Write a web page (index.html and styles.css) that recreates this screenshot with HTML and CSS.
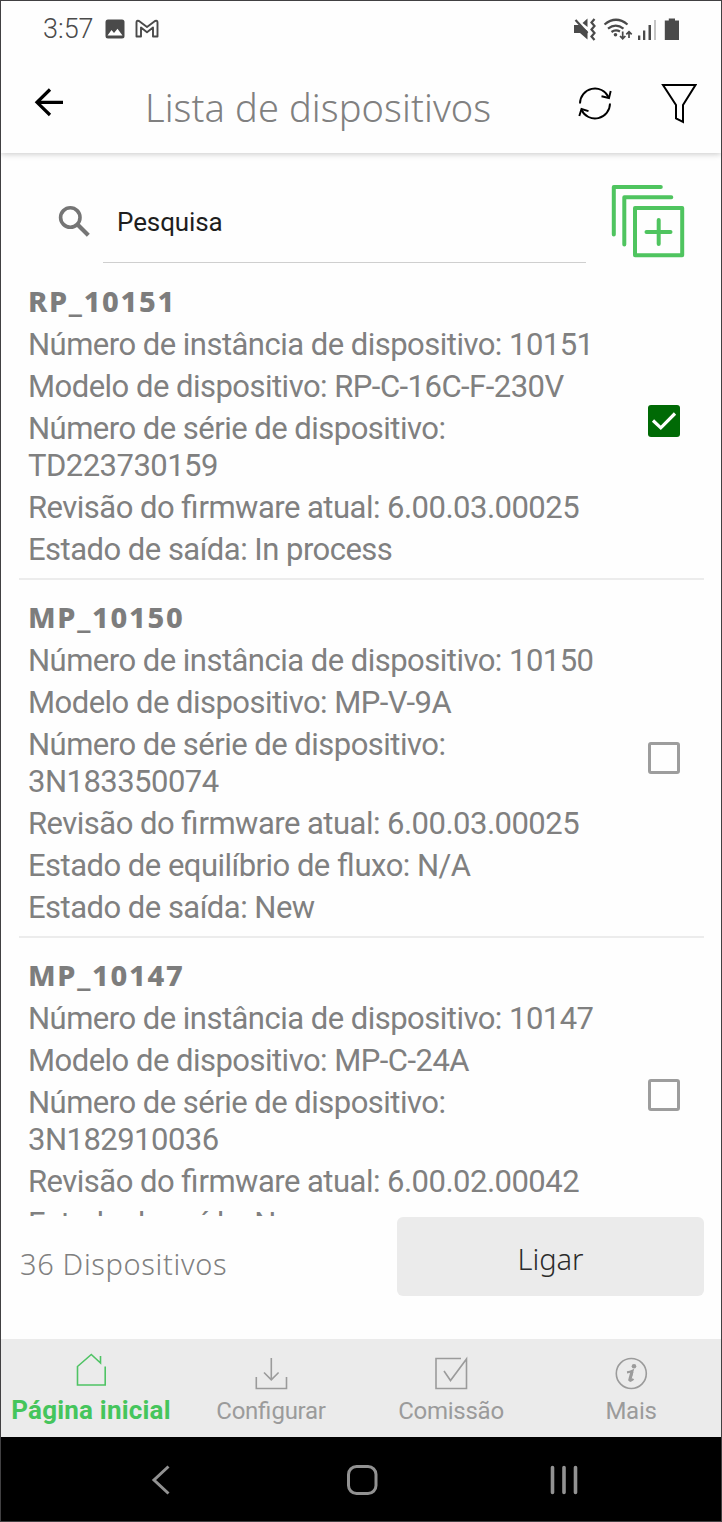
FILE: index.html
```html
<!DOCTYPE html>
<html lang="pt">
<head>
<meta charset="utf-8">
<title>Lista de dispositivos</title>
<link rel="stylesheet" href="styles.css">
</head>
<body>
<div class="phone">
  <div class="status">
    <span class="time">3:57</span>
    <svg class="status-left" width="56" height="22" viewBox="104 17 56 22">
      <rect x="105.500" y="18.500" width="19" height="19" rx="2.500" fill="#4a4a4a"/>
      <path d="M107.500 34.500l4-5.500 2.500 3 3.500-4.300 5 6.800z" fill="#fff"/>
      <path d="M136.500 35.500V21.500q0-2.500 2.500-1.500l8 6 8-6q2.500-1 2.500 1.500v14h-4.500V26.500l-6 4.700-6-4.700v9z" fill="none" stroke="#4a4a4a" stroke-width="1.900" stroke-linejoin="round"/>
    </svg>
    <svg class="status-right" width="110" height="26" viewBox="572 14 110 26">
      <g fill="#4a4a4a">
        <path d="M574 23h5l8.500 6v8.500l-7.500-6.500h-6z"/>
        <path d="M582.500 21l5-4.500v8.500z"/>
        <path d="M664.800 18.500h4V16.500h6.200v2h4V38h-14.200z"/>
        <circle cx="615.500" cy="32.700" r="1.800"/>
        <path d="M638 33.500h2.300v4.500H638zM643 28.500h2.300v9.500H643zM648.500 23h2.500v15h-2.500z"/>
      </g>
      <path d="M654 18h2v20h-2z" fill="#c4c4c4"/>
      <g fill="none" stroke="#4a4a4a" stroke-width="2.200">
        <path d="M575.500 18l12 13"/>
        <path d="M594.500 17l-3 3.500 3 3.500-3 3.500 3 3.500-3 3.500 3 3.500"/>
        <path d="M604.500 22.500q11.500-9.500 23 0M608 26.700q7.700-6 15.500 0M611.500 30q4-3 8.500-.5"/>
        <path d="M622.700 29.500v7M620 34l2.700 2.700 2.700-2.700M629 36v-6.500M626.300 32.300l2.700-2.700 2.700 2.700" stroke-width="1.700"/>
      </g>
    </svg>
  </div>

  <header class="header">
    <svg class="back" width="30" height="30" viewBox="34 87 30 30" fill="none" stroke="#000" stroke-width="3.200"><path d="M63 102.300H37M50 89.500L37 102.300 50 115"/></svg>
    <h1 class="title">Lista de dispositivos</h1>
    <svg class="refresh" width="36" height="36" viewBox="577 86 36 36" fill="none" stroke="#000" stroke-width="1.900">
      <path d="M580 103.500a15 15 0 0 1 28.500-6.500M610 103.500a15 15 0 0 1-28.500 6.500"/>
      <path d="M610.700 91l-1.700 7-7.500-1.700M579.300 116l2.200-7 7 2.200"/>
    </svg>
    <svg class="filter" width="36" height="42" viewBox="661 82 36 42" fill="none" stroke="#000" stroke-width="2"><path d="M663 85h32.500l-12.500 20v17l-7-3.500V105z"/></svg>
  </header>

  <div class="search">
    <svg class="lens" width="34" height="34" viewBox="58 205 34 34" fill="none" stroke="#757575" stroke-width="3.600"><circle cx="70.300" cy="217.500" r="9.700"/><path d="M77.500 224.500L88.300 235.300" stroke-width="4.200"/></svg>
    <div class="search-field">Pesquisa</div>
    <svg class="add" width="76" height="76" viewBox="610 183 76 76" fill="none" stroke="#4fc45f" stroke-width="4" stroke-linecap="round" stroke-linejoin="round">
      <path d="M613.800 234.500V187h47M624.300 244.500V197.200h47M635 208h47.200v47.200H635zM646.500 232h24M658.700 220v24"/>
    </svg>
  </div>

  <main class="list">
    <section class="item">
      <div class="info">
        <h2>RP_10151</h2>
        <p>Número de instância de dispositivo: 10151</p>
        <p>Modelo de dispositivo: RP-C-16C-F-230V</p>
        <p>Número de série de dispositivo:<br>TD223730159</p>
        <p>Revisão do <span class="lig">fi</span>rmware atual: 6.00.03.00025</p>
        <p>Estado de saída: In process</p>
      </div>
      <span class="check checked"><svg width="32" height="32" viewBox="0 0 32 32" fill="none" stroke="#fff" stroke-width="3.200"><path d="M5 15.500l7.800 7.300L27 8.500"/></svg></span>
    </section>
    <section class="item">
      <div class="info">
        <h2>MP_10150</h2>
        <p>Número de instância de dispositivo: 10150</p>
        <p>Modelo de dispositivo: MP-V-9A</p>
        <p>Número de série de dispositivo:<br>3N183350074</p>
        <p>Revisão do <span class="lig">fi</span>rmware atual: 6.00.03.00025</p>
        <p>Estado de equilíbrio de <span class="lig">fl</span>uxo: N/A</p>
        <p>Estado de saída: New</p>
      </div>
      <span class="check"></span>
    </section>
    <section class="item">
      <div class="info">
        <h2>MP_10147</h2>
        <p>Número de instância de dispositivo: 10147</p>
        <p>Modelo de dispositivo: MP-C-24A</p>
        <p>Número de série de dispositivo:<br>3N182910036</p>
        <p>Revisão do <span class="lig">fi</span>rmware atual: 6.00.02.00042</p>
        <p>Estado de saída: New</p>
      </div>
      <span class="check"></span>
    </section>
  </main>

  <div class="actions">
    <span class="count">36 Dispositivos</span>
    <button class="connect">Ligar</button>
  </div>

  <nav class="tabs">
    <div class="tab active">
      <svg width="36" height="36" viewBox="73 1352 36 36" fill="none" stroke="#4fc364" stroke-width="1.600"><path d="M105.200 1366.500v18.500H77.500v-18.500L91.300 1354.500l9.200 8.500v-7"/></svg>
      <span>Página inicial</span>
    </div>
    <div class="tab">
      <svg width="36" height="36" viewBox="253 1356 36 36" fill="none" stroke="#9b9b9b" stroke-width="1.600"><path d="M271.300 1358v21.500M264 1372.500l7.300 7.300 7.300-7.300M256.300 1377v11.500h30.200V1377"/></svg>
      <span>Con<span class="lig">fi</span>gurar</span>
    </div>
    <div class="tab">
      <svg width="36" height="36" viewBox="433 1356 36 36" fill="none" stroke="#9b9b9b" stroke-width="1.600"><path d="M461 1358.500h-25v30h30.500V1359L450.500 1380.500l-6.500-9.500"/></svg>
      <span>Comissão</span>
    </div>
    <div class="tab">
      <svg width="36" height="36" viewBox="613 1356 36 36" fill="none" stroke="#9b9b9b" stroke-width="1.600"><circle cx="631.300" cy="1373.500" r="15"/><circle cx="634" cy="1366.300" r="2.300" fill="#9b9b9b" stroke="none"/><path d="M627 1372.300q3-.3 5.500-1.500l-2.500 9q-.3 2.200 3.500-.8" stroke-width="2.200"/><path d="M632 1371.500l-2.500 9.500" stroke-width="3"/></svg>
      <span>Mais</span>
    </div>
  </nav>

  <div class="system">
    <svg width="720" height="84" viewBox="1 1437 720 84" fill="none" stroke="#929292" stroke-width="3">
      <path d="M168.500 1466.500L154 1480l14.500 13.500"/>
      <rect x="348.500" y="1466.500" width="27.500" height="27" rx="8"/>
      <path d="M552.500 1467.500v25M564 1467.500v25M575.500 1467.500v25" stroke-width="3.600" stroke-linecap="round"/>
    </svg>
  </div>
</div>
</body>
</html>
```
FILE: styles.css
```css
* { box-sizing: border-box; }
body { margin: 0; font-family: Roboto, sans-serif; background: #fff; }
h1, h2, p { margin: 0; font-weight: 400; }
svg { display: block; flex: none; }

.phone {
  width: 722px;
  height: 1522px;
  border: 1px solid #414042;
  display: flex;
  flex-direction: column;
  background: #fefefe;
  overflow: hidden;
}

.status {
  flex: none;
  height: 55px;
  padding: 0 39px 0 42px;
  display: flex;
  align-items: center;
}
.time { width: 61px; font-size: 27px; line-height: 30px; color: #4a4a4a; font-weight: 300; }
.status-right { margin-left: auto; }

.header {
  flex: none;
  height: 97px;
  padding: 0 24px 0 33px;
  display: flex;
  align-items: center;
  box-shadow: 0 1px 6px rgba(0, 0, 0, 0.22);
  clip-path: inset(0 0 -10px 0);
}
.back { margin-bottom: 5px; }
.title {
  margin-left: 81px;
  width: 432px;
  font: 300 38px/48px "Noto Sans", sans-serif;
  letter-spacing: 0.1px;
  color: #808080;
  padding-top: 5px;
}
.refresh { margin-bottom: 2px; }
.filter { margin: 0 0 3px auto; }

.search {
  flex: none;
  height: 111px;
  padding: 0 35px 1px 57px;
  display: flex;
  align-items: flex-end;
}
.lens { margin-bottom: 24px; }
.search-field {
  width: 483px;
  height: 80px;
  margin-left: 11px;
  padding-left: 14px;
  border-bottom: 1px solid #cfcfcf;
  font-size: 26px;
  line-height: 78px;
  letter-spacing: -0.1px;
  color: #1e1e1e;
}
.add { margin: 0 0 4px auto; }

.list { flex: none; height: 952px; padding: 0 17px 0 18px; overflow: hidden; }
.item {
  display: flex;
  align-items: center;
  justify-content: space-between;
  padding: 18px 24px 10px 9px;
  border-bottom: 2px solid #ececec;
}
.info { display: grid; gap: 5px; }
.info h2 {
  font: 800 29px/38px "Noto Sans", sans-serif;
  letter-spacing: 1.7px;
  padding-bottom: 1px;
  color: #7d7d7d;
}
.info p {
  font-size: 31px;
  line-height: 37px;
  letter-spacing: -0.52px;
  color: #808080;
  white-space: nowrap;
}
/* Chrome drops ligatures when letter-spacing is set */
.lig { letter-spacing: 0; }
.check {
  flex: none;
  width: 32px;
  height: 32px;
  margin-top: -9px;
  border: 3px solid #9d9d9d;
  border-radius: 3px;
}
.checked { border: 0; background: #006a05; }

.actions {
  flex: none;
  height: 123px;
  padding: 1px 17px 0 19px;
  display: flex;
  justify-content: space-between;
  align-items: flex-start;
}
.count {
  font: 300 29px/40px "Noto Sans", sans-serif;
  letter-spacing: 0.65px;
  color: #808080;
  margin-top: 27px;
}
.connect {
  width: 307px;
  height: 79px;
  border: 0;
  border-radius: 6px;
  background: #ebebeb;
  font: 300 29px/40px "Noto Sans", sans-serif;
  color: #2b2b2b;
  padding: 4px 0 0;
}

.tabs { flex: none; height: 98px; display: grid; grid-template-columns: repeat(4, 180px); background: #ebebeb; }
.tab {
  display: flex;
  flex-direction: column;
  align-items: center;
  padding-top: 17px;
  color: #9b9b9b;
  font-size: 24px;
  line-height: 30px;
  letter-spacing: -0.25px;
  gap: 4px;
  white-space: nowrap;
}
.active { padding-top: 13px; gap: 7px; color: #45c55c; font-size: 26px; font-weight: 700; letter-spacing: 0.2px; }

.system { flex: none; height: 84px; background: #000; }
```
